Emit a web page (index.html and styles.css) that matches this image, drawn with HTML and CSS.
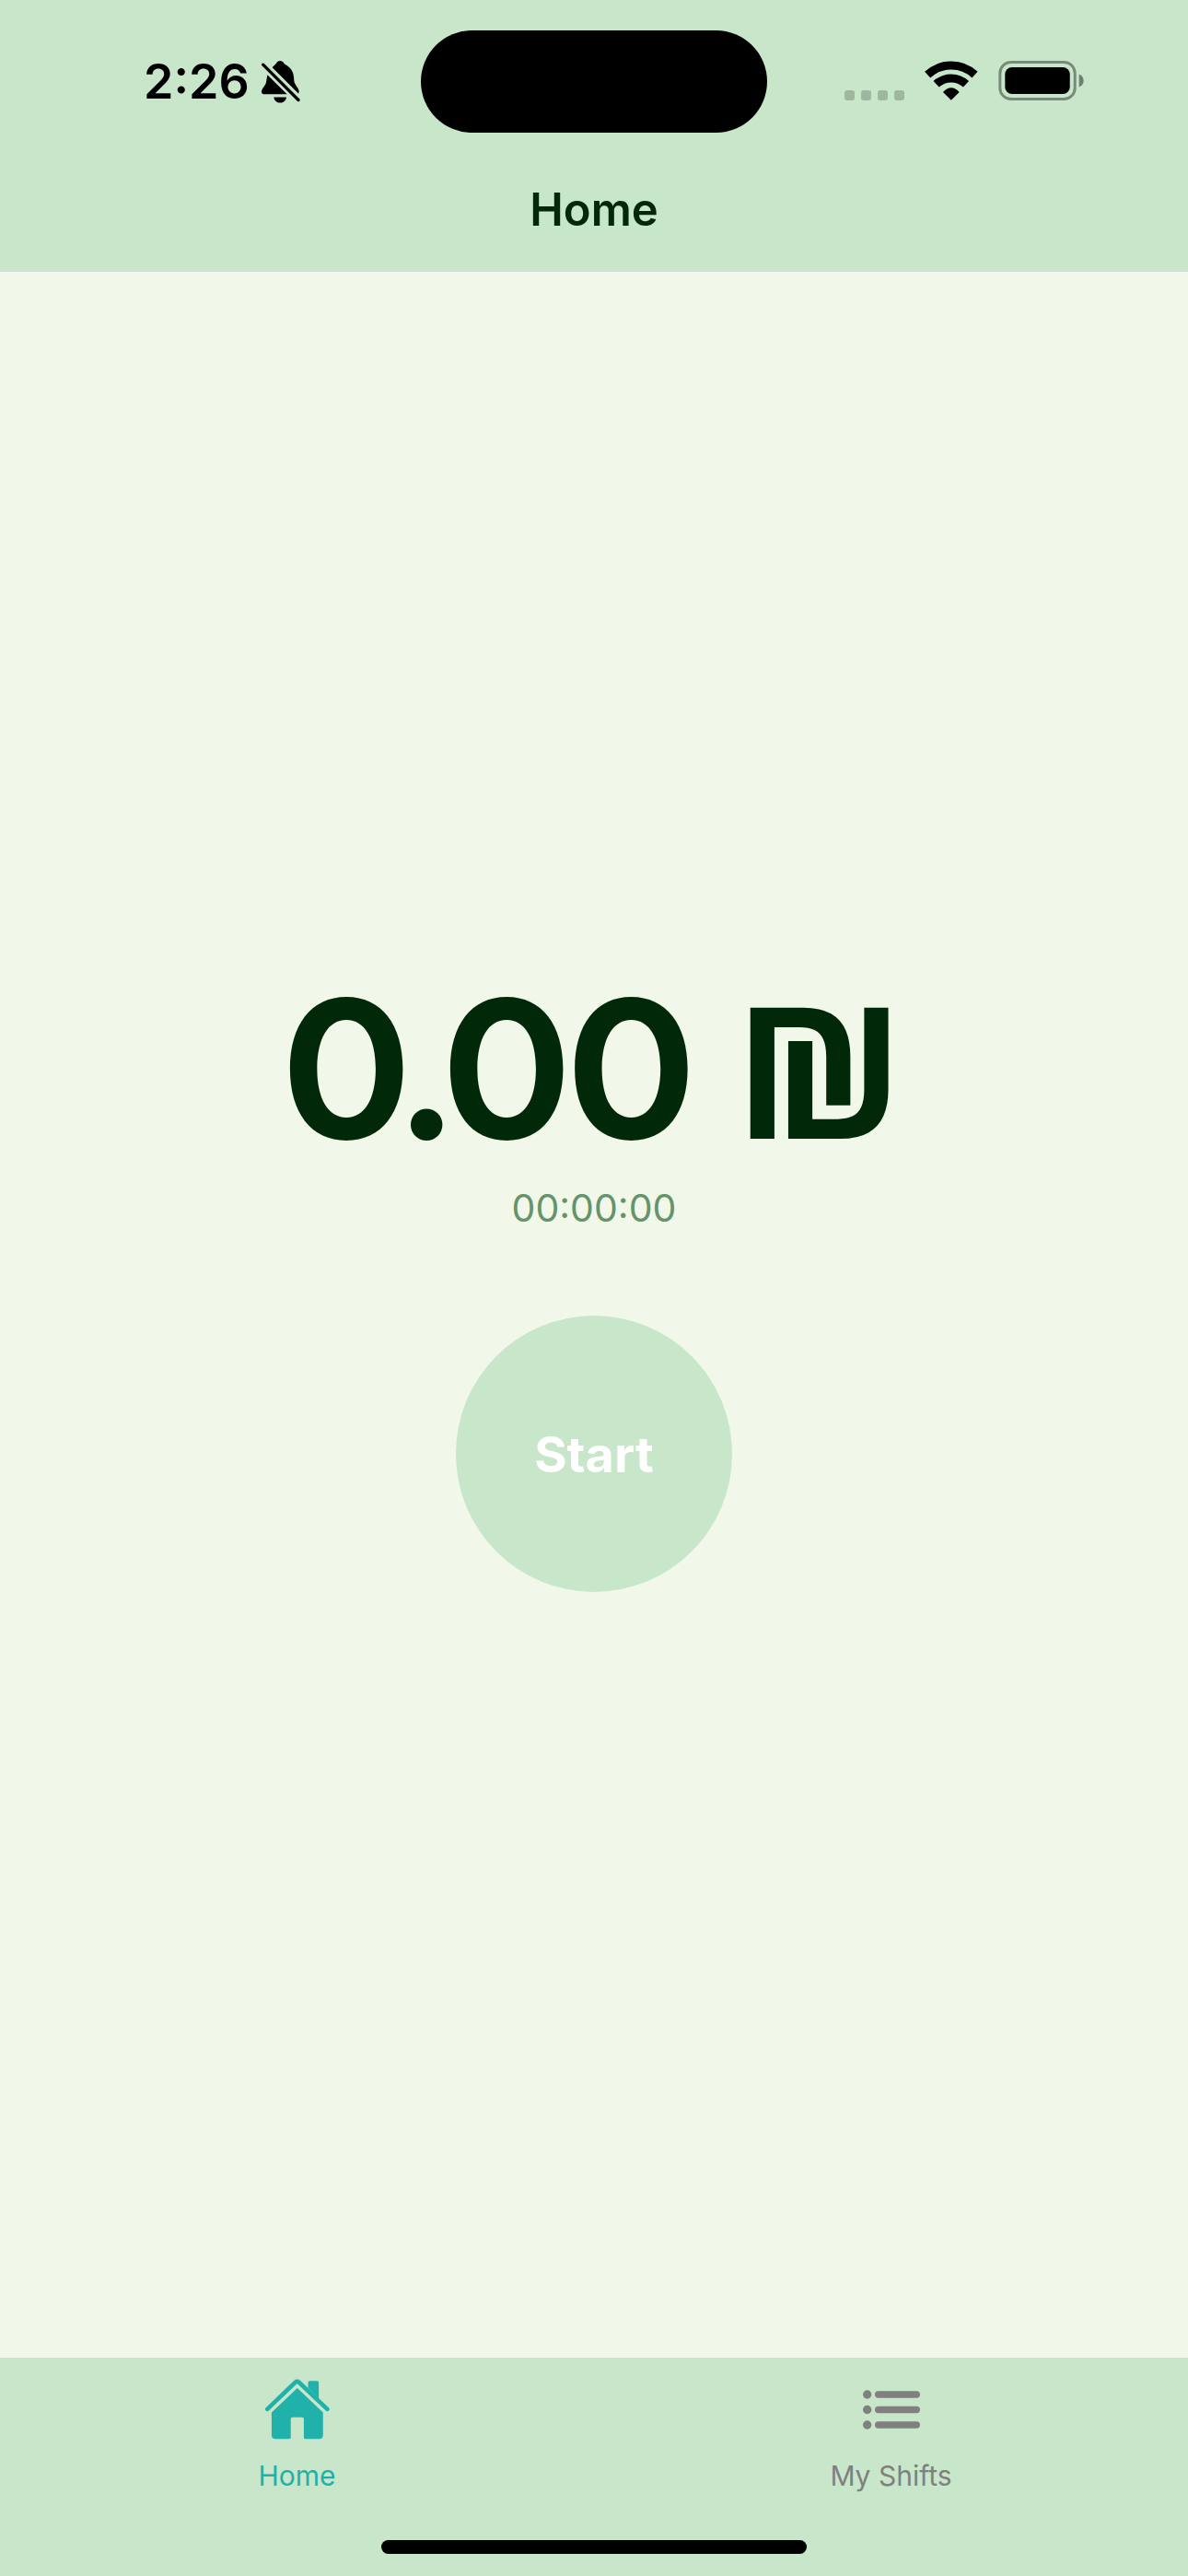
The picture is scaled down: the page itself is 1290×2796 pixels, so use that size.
FILE: index.html
```html
<!DOCTYPE html>
<html lang="en">
<head>
<meta charset="utf-8">
<meta name="viewport" content="width=device-width, initial-scale=1">
<title>Home</title>
<link rel="stylesheet" href="styles.css">
</head>
<body>
<div class="app">
  <header class="header">
    <div class="status">
      <div class="status-left">
        <time class="clock">2:26</time>
        <svg class="icon-bell" viewBox="432 45 126 137" aria-hidden="true">
          <path d="M467 66C474 58 478 57 480 53C485 42 500 42 505 53C507 57 513 58 519 63C535 75 538 92 538 110C540 125 554 133 554 145Q554 148 552 151Z"/>
          <path d="M451 90L515 153H440Q432 153 432 146C432 133 445 126 447 114Q448 108 451 90Z"/>
          <path d="M472 163H513C510 187 475 187 472 163Z"/>
          <path class="slash" d="M437 57L552 172"/>
        </svg>
      </div>
      <div class="island"></div>
      <div class="status-right">
        <svg class="icon-signal" viewBox="0 0 65 11" aria-hidden="true">
          <rect width="11" height="11" rx="3"/><rect x="18" width="11" height="11" rx="3"/><rect x="36" width="11" height="11" rx="3"/><rect x="54" width="11" height="11" rx="3"/>
        </svg>
        <svg class="icon-wifi" viewBox="311 44 174 129" aria-hidden="true">
          <path class="arc" d="M320.5 89.5A113 113 0 0 1 474.5 89.5"/>
          <path class="arc" d="M349 120A71 71 0 0 1 446 120"/>
          <path d="M397.500 172L371 146Q383 132 397.500 132T424 146Z"/>
        </svg>
        <svg class="icon-battery" viewBox="552 44 279 130" aria-hidden="true">
          <rect class="shell" x="556.5" y="48.500" width="246" height="121" rx="36"/>
          <rect x="573" y="65" width="213" height="88" rx="23"/>
          <path class="nub" d="M816 88Q831 94 831 109T816 130Z"/>
        </svg>
      </div>
    </div>
    <h1 class="title">Home</h1>
  </header>

  <main class="main">
    <p class="amount">0.00 <span class="currency">₪</span></p>
    <p class="timer">00:00:00</p>
    <button class="start" type="button">Start</button>
  </main>

  <footer class="footer">
    <nav class="tabs">
      <a class="tab tab-active" href="#home">
        <span class="tab-icon">
          <svg class="icon-home" viewBox="82 95 212 199" aria-hidden="true">
            <path class="roof" d="M89 194L181 106Q187 101 193 106L286 194"/>
            <path d="M223 124V107Q223 101 229 101H252Q258 101 258 107V160Z"/>
            <path d="M187.500 125L272 205V279Q272 292 259 292H214Q209 292 209 287V226Q209 221 204 221H171Q166 221 166 226V287Q166 292 161 292H117Q103 292 103 279V205Z"/>
          </svg>
        </span>
        <span>Home</span>
      </a>
      <a class="tab" href="#shifts">
        <span class="tab-icon">
          <svg class="icon-list" viewBox="171 129 186 129" aria-hidden="true">
            <circle cx="185" cy="144" r="14"/><circle cx="185" cy="193.500" r="14"/><circle cx="185" cy="243" r="14"/>
            <rect x="210" y="133" width="147" height="22" rx="11"/><rect x="210" y="182.500" width="147" height="22" rx="11"/><rect x="210" y="232" width="147" height="22" rx="11"/>
          </svg>
        </span>
        <span>My Shifts</span>
      </a>
    </nav>
    <div class="home-indicator"></div>
  </footer>
</div>
</body>
</html>
```
FILE: styles.css
```css
* { box-sizing: border-box; }

body {
  margin: 0;
  font-family: Inter, "Liberation Sans", sans-serif;
  color: #002809;
  background: #f1f8e9;
}

svg { display: block; fill: currentColor; }

.app {
  display: grid;
  grid-template-rows: auto 1fr auto;
  min-height: 100vh;
}

.header {
  background: #c8e6c9;
  border-bottom: 1px solid #d8d8d8;
}

.status {
  display: grid;
  grid-template-columns: 1fr 376px 1fr;
  align-items: center;
  padding: 33px 0 18px;
  color: #000;
}

.status-left, .status-right { display: flex; align-items: center; }
.status-left { padding-left: 156px; gap: 13px; }
.status-right { justify-content: flex-end; padding: 0 113px 3px 0; gap: 22px; }

.clock { font-size: 52px; line-height: 64px; font-weight: 600; }

.island { height: 111px; border-radius: 56px; background: #000; }

.icon-bell { width: 42px; height: 46px; }
.slash { stroke: #000; stroke-width: 10px; stroke-linecap: round; }
.icon-signal { width: 65px; height: 11px; opacity: 0.2; align-self: flex-end; }
.icon-wifi { width: 58px; height: 43px; }
.arc { fill: none; stroke: currentColor; stroke-width: 27px; }
.icon-battery { width: 93px; height: 43px; }
.shell { fill: none; stroke: #788a79; stroke-width: 9px; }
.nub { fill: #6f8070; }

.title {
  margin: 0;
  font-size: 49px;
  line-height: 132px;
  font-weight: 600;
  text-align: center;
}

.main {
  display: flex;
  flex-direction: column;
  align-items: center;
  justify-content: center;
  padding-bottom: 84px;
}

.amount {
  margin: 0;
  font-family: "Inter Display", Inter, sans-serif;
  font-size: 208px;
  line-height: 236px;
  font-weight: 700;
}

.currency {
  font-family: "Open Sans", "Noto Sans", sans-serif;
  font-size: 200px;
  line-height: 1;
}

.timer {
  margin: 8px 0 92px;
  font-size: 41px;
  line-height: 50px;
  color: #66946a;
}

.start {
  width: 300px;
  height: 300px;
  padding: 0;
  border: 0;
  border-radius: 50%;
  background: #c8e6c9;
  color: #fff;
  font: inherit;
  font-size: 54px;
  font-weight: 700;
}

.footer {
  display: flex;
  flex-direction: column;
  align-items: center;
  gap: 52px;
  padding: 23px 0 24px;
  background: #c8e6c9;
}

.tabs { display: grid; grid-template-columns: 1fr 1fr; width: 100%; }

.tab {
  display: flex;
  flex-direction: column;
  align-items: center;
  gap: 21px;
  font-size: 30px;
  line-height: 36px;
  color: #808080;
  text-decoration: none;
}
.tab-active { color: #20b2aa; }
.tab-icon { display: flex; align-items: center; height: 66px; }
.icon-home { width: 70px; height: 66px; }
.roof { fill: none; stroke: currentColor; stroke-width: 14px; stroke-linecap: round; }
.icon-list { width: 62px; height: 43px; }

.home-indicator { width: 462px; height: 15px; border-radius: 8px; background: #000; }
```
